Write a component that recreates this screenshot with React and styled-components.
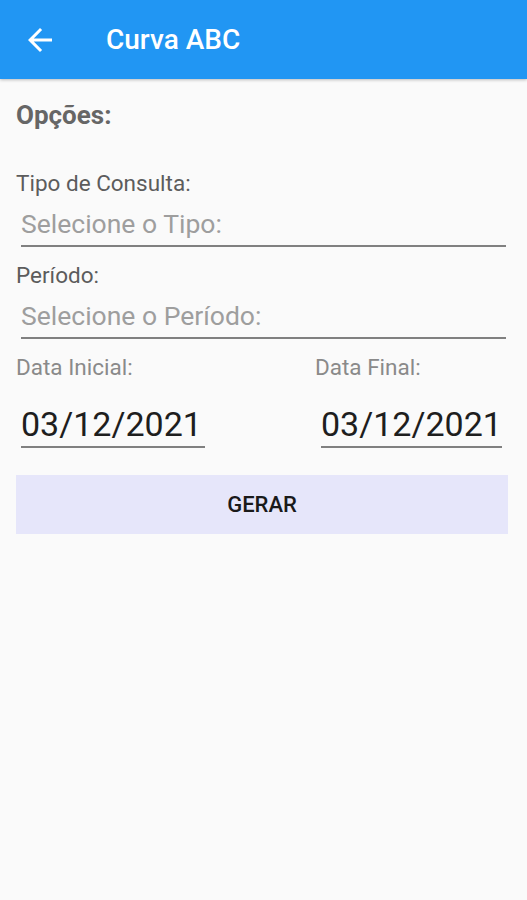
import React from 'react';
import styled, { createGlobalStyle } from 'styled-components';

const GlobalStyle = createGlobalStyle`
  html, body {
    margin: 0;
    padding: 0;
    background: #fafafa;
    font-family: Roboto, "Noto Sans", sans-serif;
  }
`;

const Page = styled.div`
  min-height: 900px;
  background: #fafafa;
`;

const AppBar = styled.header`
  height: 79px;
  display: flex;
  align-items: center;
  padding-left: 22px;
  background: #2196f3;
  box-shadow: 0 1px 3px rgba(0, 0, 0, 0.25);
`;

const BackButton = styled.button`
  display: flex;
  padding: 0;
  border: 0;
  background: none;
  cursor: pointer;
`;

const Title = styled.h1`
  margin: 0 0 0 48px;
  font-size: 28px;
  font-weight: 500;
  line-height: 34px;
  color: #fff;
`;

const Content = styled.main`
  padding: 20px 19px 0 16px;
  display: flex;
  flex-direction: column;
`;

const SectionTitle = styled.div`
  font-size: 26px;
  font-weight: 700;
  line-height: 32px;
  color: #666;
`;

const Label = styled.div`
  margin-top: ${(p) => p.$gap}px;
  font-size: 22.5px;
  line-height: 28px;
  color: ${(p) => (p.$light ? '#8a8a8a' : '#5c5c5c')};
`;

const Select = styled.div`
  margin: ${(p) => p.$gap}px 2px 0 5px;
  padding-bottom: 4px;
  border-bottom: 2px solid #808080;
  font-size: 26.5px;
  line-height: 34px;
  color: #9e9e9e;
`;

const DateRow = styled.div`
  display: flex;
  justify-content: space-between;
`;

const DateColumn = styled.div`
  display: flex;
  flex-direction: column;
  width: ${(p) => p.$width}px;
`;

const DateField = styled.div`
  margin: 23px ${(p) => p.$indent}px 0 ${(p) => p.$indent}px;
  padding-bottom: 2px;
  border-bottom: 2px solid #808080;
  font-size: 34px;
  line-height: 40px;
  color: #1e1e1e;
  white-space: nowrap;
`;

const Button = styled.button`
  margin-top: 27px;
  height: 59px;
  border: 0;
  background: #e6e6fa;
  font-family: inherit;
  font-size: 22px;
  font-weight: 500;
  color: #1a1a1a;
  cursor: pointer;
`;

const ArrowBack = () => (
  <svg width="36" height="36" viewBox="0 0 24 24" fill="#fff">
    <path d="M20 11H7.83l5.59-5.59L12 4l-8 8 8 8 1.41-1.41L7.83 13H20v-2z" />
  </svg>
);

export default function App() {
  return (
    <Page>
      <GlobalStyle />
      <AppBar>
        <BackButton aria-label="Voltar">
          <ArrowBack />
        </BackButton>
        <Title>Curva ABC</Title>
      </AppBar>
      <Content>
        <SectionTitle>Opções:</SectionTitle>
        <Label $gap={38}>Tipo de Consulta:</Label>
        <Select $gap={10}>Selecione o Tipo:</Select>
        <Label $gap={14}>Período:</Label>
        <Select $gap={10}>Selecione o Período:</Select>
        <DateRow>
          <DateColumn $width={194}>
            <Label $gap={14} $light>Data Inicial:</Label>
            <DateField $indent={5}>03/12/2021</DateField>
          </DateColumn>
          <DateColumn $width={193}>
            <Label $gap={14} $light>Data Final:</Label>
            <DateField $indent={6}>03/12/2021</DateField>
          </DateColumn>
        </DateRow>
        <Button>GERAR</Button>
      </Content>
    </Page>
  );
}
